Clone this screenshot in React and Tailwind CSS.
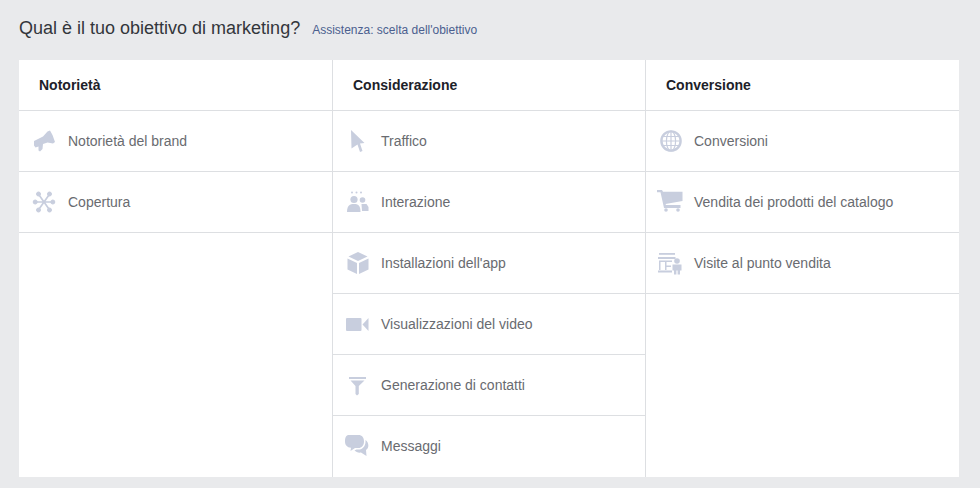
const ICON = '#c8cede';

const Megaphone = () => (
  <svg width="24" height="24" viewBox="0 0 24 24" fill={ICON}>
    <path d="M2 12 L11 7.5 L15.5 2.5 L18 1.5 L20.5 6 L23 13 L21 14.5 L15.5 13.5 L11 15 L10.5 20 L8 22.5 L6.5 21.5 L6.5 17.5 L3.5 18.5 L2 16.5 Z" />
  </svg>
);

const Reach = () => (
  <svg width="24" height="24" viewBox="0 0 24 24" fill={ICON} stroke={ICON}>
    <path d="M3 12 H21 M6 3.5 L18 20.5 M18 3.5 L6 20.5" strokeWidth="1.7" />
    <circle cx="3.2" cy="12" r="2" />
    <circle cx="20.8" cy="12" r="2" />
    <circle cx="6.5" cy="4" r="2" />
    <circle cx="17.5" cy="4" r="2" />
    <circle cx="6.5" cy="20" r="2" />
    <circle cx="17.5" cy="20" r="2" />
  </svg>
);

const Cursor = () => (
  <svg width="24" height="24" viewBox="0 0 24 24" fill={ICON}>
    <path d="M5 1 L18.5 14 L14 14.5 L16.5 22 L14 23 L11.5 15.5 L5.5 19.5 Z" />
  </svg>
);

const People = () => (
  <svg width="24" height="24" viewBox="0 0 24 24" fill={ICON}>
    <circle cx="6" cy="2.5" r="1" />
    <circle cx="10.5" cy="2.5" r="1" />
    <circle cx="15" cy="2.5" r="1" />
    <circle cx="8" cy="9.5" r="3.6" />
    <circle cx="16.5" cy="10" r="2.8" />
    <path d="M1 22 C1 15.5 4 14 8 14 C12 14 14.5 15.5 14.5 22 Z" />
    <path d="M15.5 14 L20.5 14 L22.5 17 L22.5 21 L16 21 Z" />
  </svg>
);

const Box = () => (
  <svg width="24" height="24" viewBox="0 0 24 24" fill={ICON}>
    <path d="M12 1 L21.5 5.5 L12 10 L2.5 5.5 Z" />
    <path d="M1.5 7.5 L11 12 L11 23 L1.5 18.5 Z" />
    <path d="M22.5 7.5 L13 12 L13 23 L22.5 18.5 Z" />
  </svg>
);

const Video = () => (
  <svg width="24" height="24" viewBox="0 0 24 24" fill={ICON}>
    <rect x="0" y="6" width="15.5" height="13" rx="1" />
    <path d="M16.5 12.5 L22.5 6 L22.5 19 Z" />
  </svg>
);

const Funnel = () => (
  <svg width="24" height="24" viewBox="0 0 24 24" fill={ICON}>
    <rect x="3" y="4" width="17" height="2" />
    <path d="M4.5 7.5 H18.5 L12.8 13 V21 L11 22.5 L9.5 21 V13 Z" />
  </svg>
);

const Chat = () => (
  <svg width="24" height="24" viewBox="0 0 24 24" fill={ICON} overflow="visible">
    <path d="M3 1 H12.5 C16 1 18 3.5 18 7.5 C18 11.5 15.5 14 12.5 14 H9 L4.5 17 L5 13.8 C1 13.5 -1 11 -1 7.5 C-1 3.5 0 1 3 1 Z" />
    <path d="M19.5 6 C23 8.5 23.5 14 20 16 L20.5 22 L15 18.5 C12.5 19 10 18 8.5 16.5 L10.5 15.5 H13.5 C17.5 15 20 11 19.5 6 Z" />
  </svg>
);

const Globe = () => (
  <svg width="24" height="24" viewBox="0 0 24 24" fill="none" stroke={ICON}>
    <circle cx="12" cy="12" r="9.6" strokeWidth="2.4" />
    <ellipse cx="12" cy="12" rx="4.6" ry="10" strokeWidth="1.2" />
    <path d="M12 2 V22 M2 12 H22 M3.5 7.5 H20.5 M3.5 16.5 H20.5" strokeWidth="1.2" />
  </svg>
);

const Cart = () => (
  <svg width="24" height="24" viewBox="0 0 24 24" fill={ICON} overflow="visible">
    <path d="M-2 0 H3 L4 1.7 H23.5 V11 L6.5 14 L7 15 H21.5 V18 H5 L1.5 2.2 H-2 Z" />
    <circle cx="7" cy="20" r="1.8" />
    <circle cx="19" cy="20" r="1.8" />
  </svg>
);

const Store = () => (
  <svg width="24" height="24" viewBox="0 0 24 24" fill={ICON} overflow="visible">
    <rect x="0" y="2" width="16" height="1.8" />
    <rect x="-1" y="6" width="17.5" height="2" />
    <path d="M0 9.5 H13 V11 H7.5 V14.5 H12 V16 H7.5 V19 H6 V11 H1.5 V19 H0 Z" />
    <rect x="-1" y="19.5" width="14" height="2" />
    <circle cx="18" cy="10" r="2.8" />
    <path d="M13.5 13.5 H22.5 V19.5 H21 V23.5 H18.6 V19.5 H17.4 V23.5 H15 V19.5 H13.5 Z" />
  </svg>
);

const COLUMNS = [
  {
    title: 'Notorietà',
    items: [
      { label: 'Notorietà del brand', icon: Megaphone },
      { label: 'Copertura', icon: Reach },
    ],
  },
  {
    title: 'Considerazione',
    items: [
      { label: 'Traffico', icon: Cursor },
      { label: 'Interazione', icon: People },
      { label: "Installazioni dell'app", icon: Box },
      { label: 'Visualizzazioni del video', icon: Video },
      { label: 'Generazione di contatti', icon: Funnel },
      { label: 'Messaggi', icon: Chat },
    ],
  },
  {
    title: 'Conversione',
    items: [
      { label: 'Conversioni', icon: Globe },
      { label: 'Vendita dei prodotti del catalogo', icon: Cart },
      { label: 'Visite al punto vendita', icon: Store },
    ],
  },
];

const App = () => (
  <div className="h-[488px] w-[980px] overflow-hidden bg-[#e9eaec] px-[19px] font-['Liberation_Sans',Arial,sans-serif]">
    <div className="flex h-[60px] items-baseline pt-4">
      <h1 className="text-[18px] leading-6 font-normal text-[#33363b]">Qual è il tuo obiettivo di marketing?</h1>
      <a className="ml-3 text-xs text-[#4b5f8f]">Assistenza: scelta dell'obiettivo</a>
    </div>

    <div className="grid h-[417px] w-[940px] grid-cols-[314px_313px_313px] bg-white">
      {COLUMNS.map(({ title, items }, i) => (
        <div key={title} className={i < 2 ? 'border-r border-[#dddfe2]' : ''}>
          <div className="flex h-[51px] items-center border-b border-[#dddfe2] pl-5 text-sm font-bold text-[#1d2129]">
            {title}
          </div>
          {items.map(({ label, icon: Icon }, j) => (
            <div
              key={label}
              className={`flex h-[61px] items-center border-b pl-[13px] text-sm text-[#696b70] ${i === 0 ? 'gap-3' : 'gap-[11px]'} ${i === 1 && j === items.length - 1 ? 'border-transparent' : 'border-[#dddfe2]'}`}
            >
              <Icon />
              <span>{label}</span>
            </div>
          ))}
        </div>
      ))}
    </div>
  </div>
);

export default App;
